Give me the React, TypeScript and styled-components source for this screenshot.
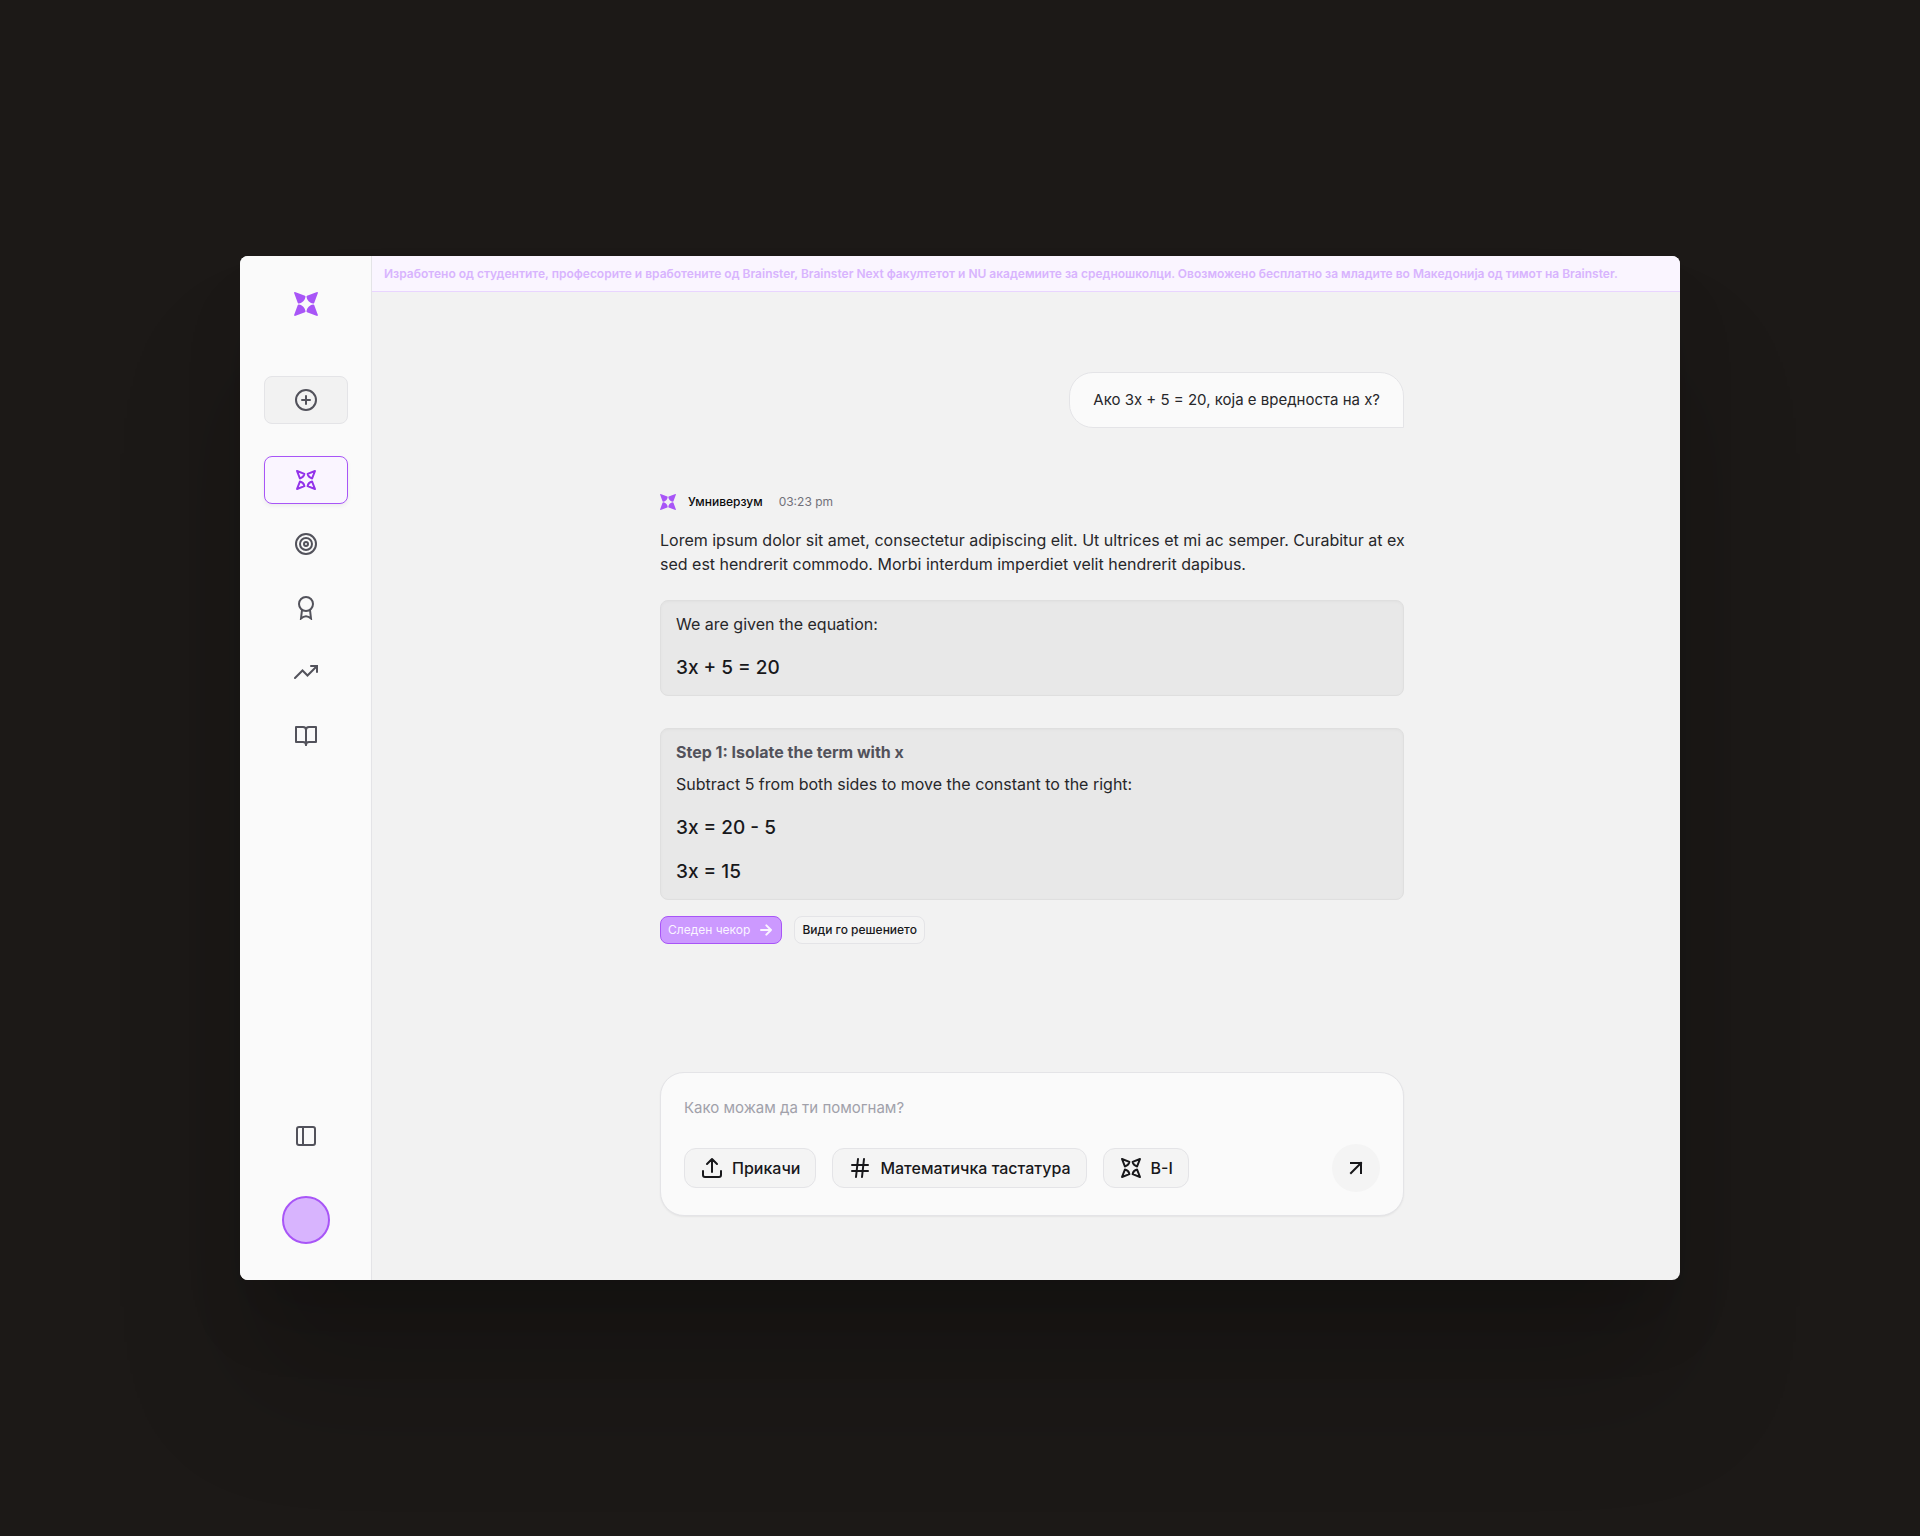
import React, { type ReactNode } from "react";
import styled, { createGlobalStyle, css } from "styled-components";
import { CirclePlus, Hash, PanelLeft } from "lucide-react";

const color = {
  ink: "#27272a",
  strong: "#18181b",
  icon: "#52525b",
  muted: "#71717a",
  placeholder: "#a1a1aa",
  surface: "#fafafa",
  canvas: "#f2f2f2",
  chip: "#f4f4f4",
  card: "#e8e8e8",
  line: "#e4e4e7",
  cardLine: "#dfdfdf",
  violet: "#a855f7",
  violetDeep: "#9333ea",
  violetSoft: "#d8b4fe",
  violetPale: "#faf5ff",
};

const GlobalStyle = createGlobalStyle`
  *, *::before, *::after { box-sizing: border-box; }
  body {
    margin: 0;
    background: #1c1917;
    color: ${color.ink};
    font-family: Inter, "Noto Sans", "Liberation Sans", sans-serif;
    font-size: 16px;
    line-height: 24px;
  }
  button, input { font: inherit; color: inherit; }
  button { cursor: pointer; }
  svg { display: block; flex: none; }
`;

const Page = styled.div`
  display: flex;
  min-height: 100vh;
  padding: 256px 240px;
`;

const Window = styled.div`
  display: flex;
  flex: 1;
  min-width: 0;
  overflow: hidden;
  border-radius: 8px;
  background: ${color.canvas};
  box-shadow:
    0 48px 64px -16px rgba(0, 0, 0, 0.18),
    0 112px 128px rgba(0, 0, 0, 0.16);
`;

const Sidebar = styled.aside`
  display: flex;
  flex-direction: column;
  align-items: stretch;
  flex: 0 0 132px;
  padding: 24px 23px 36px 24px;
  border-right: 1px solid ${color.line};
  background: ${color.surface};
`;

const LogoLink = styled.a`
  display: flex;
  align-items: center;
  justify-content: center;
  height: 48px;
  margin-bottom: 48px;
`;

const Nav = styled.nav`
  display: flex;
  flex-direction: column;
  gap: 16px;
  margin-top: 32px;
`;

const SideButton = styled.button<{ $look?: "filled" | "active" }>`
  display: flex;
  align-items: center;
  justify-content: center;
  height: 48px;
  padding: 0;
  border: 1px solid transparent;
  border-radius: 8px;
  background: transparent;
  color: ${color.icon};

  ${({ $look }) =>
    $look === "filled" &&
    css`
      border-color: ${color.line};
      background: ${color.canvas};
    `}

  ${({ $look }) =>
    $look === "active" &&
    css`
      border-color: ${color.violet};
      background: ${color.violetPale};
      color: ${color.violetDeep};
      box-shadow: 0 2px 4px rgba(0, 0, 0, 0.06);
    `}
`;

const SideFooter = styled.div`
  display: flex;
  flex-direction: column;
  gap: 36px;
  margin-top: auto;
`;

const Avatar = styled.button`
  align-self: center;
  width: 48px;
  height: 48px;
  padding: 0;
  border: 2px solid ${color.violet};
  border-radius: 50%;
  background: ${color.violetSoft};
`;

const Main = styled.main`
  display: flex;
  flex: 1;
  flex-direction: column;
  min-width: 0;
`;

const Banner = styled.p`
  margin: 0;
  padding: 6px 12px 5px;
  border-bottom: 1px solid #e9d5ff;
  background: ${color.violetPale};
  color: ${color.violetSoft};
  font-size: 12px;
  font-weight: 600;
  white-space: nowrap;
`;

const Conversation = styled.div`
  display: flex;
  flex: 1;
  flex-direction: column;
  width: 100%;
  max-width: 756px;
  margin: 0 auto;
  padding: 80px 0 64px 12px;
`;

const Question = styled.p`
  align-self: flex-end;
  margin: 0 0 64px;
  padding: 15px 23px;
  border: 1px solid ${color.line};
  border-radius: 24px 24px 0 24px;
  background: ${color.surface};
  font-size: 15px;
`;

const Answer = styled.article`
  display: flex;
  flex-direction: column;
`;

const Byline = styled.header`
  display: flex;
  align-items: center;
  margin-bottom: 16px;
  font-size: 12px;
  line-height: 20px;
`;

const Author = styled.span`
  margin: 0 16px 0 12px;
  color: #09090b;
  font-weight: 500;
`;

const Time = styled.time`
  color: ${color.muted};
`;

const Intro = styled.p`
  margin: 0 -12px 24px 0;
`;

const Steps = styled.div`
  display: flex;
  flex-direction: column;
  gap: 32px;
  margin-bottom: 16px;
`;

const Step = styled.section`
  padding: 11px 15px;
  border: 1px solid ${color.cardLine};
  border-radius: 8px;
  background: ${color.card};
  box-shadow: inset 0 1px 3px rgba(0, 0, 0, 0.03);
`;

const StepTitle = styled.h2`
  margin: 0 0 8px;
  color: ${color.icon};
  font-size: 16px;
  font-weight: 700;
  line-height: 24px;
`;

const StepText = styled.p`
  margin: 0 0 16px;
`;

const Equation = styled.p`
  margin: 0;
  color: ${color.strong};
  font-size: 19px;
  font-weight: 500;
  line-height: 32px;

  & + & {
    margin-top: 12px;
  }
`;

const StepActions = styled.div`
  display: flex;
  gap: 12px;
`;

const SmallButton = styled.button<{ $primary?: boolean }>`
  display: flex;
  align-items: center;
  gap: 8px;
  height: 28px;
  padding: 0 7px;
  border: 1px solid ${({ $primary }) => ($primary ? color.violet : color.line)};
  border-radius: 8px;
  background: ${({ $primary }) => ($primary ? "#cc99ff" : color.chip)};
  color: ${({ $primary }) => ($primary ? color.violetPale : color.strong)};
  font-size: 12px;
  font-weight: ${({ $primary }) => ($primary ? 400 : 500)};
  line-height: 20px;
`;

const Composer = styled.form`
  display: flex;
  flex-direction: column;
  gap: 24px;
  margin-top: auto;
  padding: 23px;
  border: 1px solid ${color.line};
  border-radius: 24px;
  background: ${color.surface};
  box-shadow: 0 1px 2px rgba(0, 0, 0, 0.06);
`;

const Prompt = styled.input`
  width: 100%;
  height: 24px;
  padding: 0;
  border: 0;
  outline: 0;
  background: transparent;
  font-size: 15px;

  &::placeholder {
    color: ${color.placeholder};
    opacity: 1;
  }
`;

const Tools = styled.div`
  display: flex;
  align-items: center;
  gap: 16px;
`;

const Chip = styled.button`
  display: flex;
  align-items: center;
  gap: 8px;
  height: 40px;
  padding: 0 15px;
  border: 1px solid ${color.line};
  border-radius: 12px;
  background: ${color.chip};
  color: ${color.strong};
  font-weight: 500;
`;

const Send = styled.button`
  display: flex;
  align-items: center;
  justify-content: center;
  width: 48px;
  height: 48px;
  margin-left: auto;
  padding: 0;
  border: 0;
  border-radius: 50%;
  background: ${color.chip};
  color: ${color.strong};
`;

const quarterTurns = [0, 90, 180, 270];

function StarSolid({ size }: { size: number }) {
  return (
    <svg width={size} height={size} viewBox="0 0 24 24" fill={color.violet} aria-hidden="true">
      {quarterTurns.map((turn) => (
        <path
          key={turn}
          transform={`rotate(${turn} 12 12)`}
          d="M0.9 0.1 L11 3.8 Q11.6 4.1 11.5 4.8 C11 8.4 8.4 11 4.8 11.5 Q4.1 11.6 3.8 11 L0.1 0.9 Q0 0 0.9 0.1 Z"
        />
      ))}
    </svg>
  );
}

function LineIcon({
  size = 24,
  weight = 2,
  cap = "round",
  join = "round",
  children,
}: {
  size?: number;
  weight?: number;
  cap?: "round" | "square" | "butt";
  join?: "round" | "miter";
  children: ReactNode;
}) {
  return (
    <svg
      width={size}
      height={size}
      viewBox="0 0 24 24"
      fill="none"
      stroke="currentColor"
      strokeWidth={weight}
      strokeLinecap={cap}
      strokeLinejoin={join}
      aria-hidden="true"
    >
      {children}
    </svg>
  );
}

const StarOutline = () => (
  <LineIcon>
    {quarterTurns.map((turn) => (
      <path key={turn} transform={`rotate(${turn} 12 12)`} d="M3 3 L10.4 5.9 C9.9 8.2 8.2 9.9 5.9 10.4 Z" />
    ))}
  </LineIcon>
);

const TargetIcon = () => (
  <LineIcon>
    <circle cx="12" cy="12" r="10" />
    <circle cx="12" cy="12" r="6" />
    <circle cx="12" cy="12" r="2" />
  </LineIcon>
);

const AwardIcon = () => (
  <LineIcon join="miter">
    <circle cx="12" cy="8" r="7" />
    <path d="M8 14 7 22.5Q12 18 17 22.5L16 14" />
  </LineIcon>
);

const TrendIcon = () => (
  <LineIcon join="miter">
    <path d="M1 18l7.5-7.5 5 5L23 6" />
    <path d="M17 6h6v6" />
  </LineIcon>
);

const BookIcon = () => (
  <LineIcon>
    <path d="M12 21V6a3 3 0 0 0-3-3H2v15h7a3 3 0 0 1 3 3z" />
    <path d="M12 21V6a3 3 0 0 1 3-3h7v15h-7a3 3 0 0 0-3 3z" />
  </LineIcon>
);

const UploadIcon = () => (
  <LineIcon>
    <path d="M12 16V3M7 8l5-5 5 5M3 15v4a2 2 0 0 0 2 2h14a2 2 0 0 0 2-2v-4" />
  </LineIcon>
);

const NextIcon = () => (
  <LineIcon size={16} weight={3}>
    <path d="M4.5 12h15M12.5 5l7 7-7 7" />
  </LineIcon>
);

const SendIcon = () => (
  <LineIcon cap="square" join="miter">
    <path d="M7 17 17 7M7 7h10v10" />
  </LineIcon>
);

export default function App() {
  return (
    <>
      <GlobalStyle />
      <Page>
        <Window>
          <Sidebar>
            <LogoLink href="#" aria-label="Умниверзум">
              <StarSolid size={24} />
            </LogoLink>
            <SideButton type="button" $look="filled" aria-label="Нов разговор">
              <CirclePlus size={24} />
            </SideButton>
            <Nav>
              <SideButton type="button" $look="active" aria-label="Асистент">
                <StarOutline />
              </SideButton>
              <SideButton type="button" aria-label="Цели">
                <TargetIcon />
              </SideButton>
              <SideButton type="button" aria-label="Награди">
                <AwardIcon />
              </SideButton>
              <SideButton type="button" aria-label="Напредок">
                <TrendIcon />
              </SideButton>
              <SideButton type="button" aria-label="Лекции">
                <BookIcon />
              </SideButton>
            </Nav>
            <SideFooter>
              <SideButton type="button" aria-label="Странична лента">
                <PanelLeft size={24} />
              </SideButton>
              <Avatar type="button" aria-label="Профил" />
            </SideFooter>
          </Sidebar>
          <Main>
            <Banner>
              Изработено од студентите, професорите и вработените од Brainster, Brainster Next факултетот и NU
              академиите за средношколци. Овозможено бесплатно за младите во Македонија од тимот на Brainster.
            </Banner>
            <Conversation>
              <Question>Ако 3x + 5 = 20, која е вредноста на x?</Question>
              <Answer>
                <Byline>
                  <StarSolid size={16} />
                  <Author>Умниверзум</Author>
                  <Time dateTime="15:23">03:23 pm</Time>
                </Byline>
                <Intro>
                  Lorem ipsum dolor sit amet, consectetur adipiscing elit. Ut ultrices et mi ac semper. Curabitur at ex
                  sed est hendrerit commodo. Morbi interdum imperdiet velit hendrerit dapibus.
                </Intro>
                <Steps>
                  <Step>
                    <StepText>We are given the equation:</StepText>
                    <Equation>3x + 5 = 20</Equation>
                  </Step>
                  <Step>
                    <StepTitle>Step 1: Isolate the term with x</StepTitle>
                    <StepText>Subtract 5 from both sides to move the constant to the right:</StepText>
                    <Equation>3x = 20 - 5</Equation>
                    <Equation>3x = 15</Equation>
                  </Step>
                </Steps>
                <StepActions>
                  <SmallButton type="button" $primary>
                    Следен чекор
                    <NextIcon />
                  </SmallButton>
                  <SmallButton type="button">Види го решението</SmallButton>
                </StepActions>
              </Answer>
              <Composer onSubmit={(event) => event.preventDefault()}>
                <Prompt type="text" aria-label="Порака" placeholder="Како можам да ти помогнам?" />
                <Tools>
                  <Chip type="button">
                    <UploadIcon />
                    Прикачи
                  </Chip>
                  <Chip type="button">
                    <Hash size={24} />
                    Математичка тастатура
                  </Chip>
                  <Chip type="button">
                    <StarOutline />
                    B-I
                  </Chip>
                  <Send type="submit" aria-label="Испрати">
                    <SendIcon />
                  </Send>
                </Tools>
              </Composer>
            </Conversation>
          </Main>
        </Window>
      </Page>
    </>
  );
}
